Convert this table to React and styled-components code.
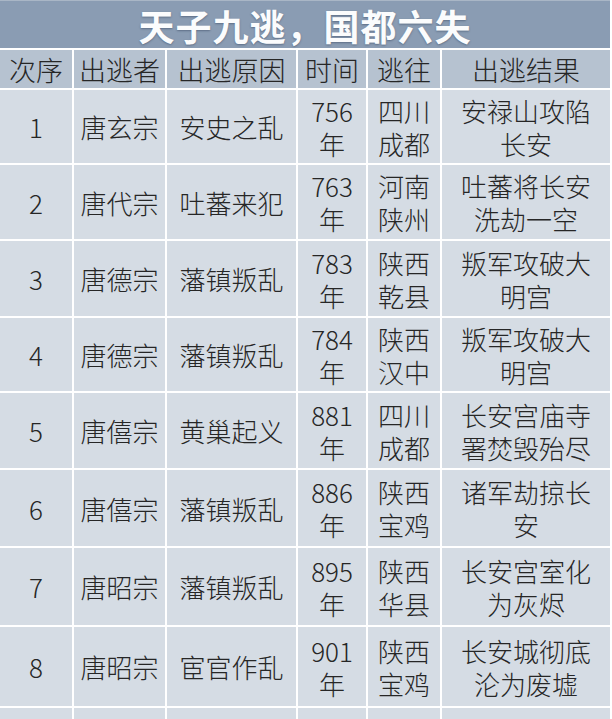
import React from 'react';
import styled, { createGlobalStyle } from 'styled-components';

const Global = createGlobalStyle`
  body {
    margin: 0;
    background: #fff;
    font-family: "Noto Sans CJK SC", "Noto Sans", sans-serif;
  }
`;

const Wrap = styled.div`
  width: 610px;
  display: flex;
  flex-direction: column;
  gap: 2px;
  background: #fff;
`;

const Title = styled.div`
  height: 48px;
  background: #8a9cb3;
  border-top: 1px solid #a9b6c6;
  box-sizing: border-box;
  display: flex;
  align-items: center;
  justify-content: center;
  color: #fbfcfd;
  font-size: 36px;
  font-weight: 700;
  letter-spacing: 1px;
  text-shadow: 0 1px 2px rgba(40, 55, 80, 0.45);
`;

const Grid = styled.div`
  display: grid;
  grid-template-columns: 72px 91px 129px 68px 72px 168px;
  grid-auto-rows: ${(p) => p.rowH}px;
  gap: 2px;
`;

const Cell = styled.div`
  background: ${(p) => (p.head ? '#b6c2d0' : '#d5dce4')};
  display: flex;
  flex-direction: column;
  align-items: center;
  justify-content: center;
  text-align: center;
  color: #262626;
  font-size: ${(p) => (p.head ? 27 : 26)}px;
  font-weight: 300;
  line-height: 33px;
  padding: 0 4px;
  box-sizing: border-box;
`;

const Line = styled.span`
  display: block;
  white-space: nowrap;
`;

const heads = ['次序', '出逃者', '出逃原因', '时间', '逃往', '出逃结果'];

const rows = [
  ['1', '唐玄宗', '安史之乱', ['756', '年'], ['四川', '成都'], ['安禄山攻陷', '长安']],
  ['2', '唐代宗', '吐蕃来犯', ['763', '年'], ['河南', '陕州'], ['吐蕃将长安', '洗劫一空']],
  ['3', '唐德宗', '藩镇叛乱', ['783', '年'], ['陕西', '乾县'], ['叛军攻破大', '明宫']],
  ['4', '唐德宗', '藩镇叛乱', ['784', '年'], ['陕西', '汉中'], ['叛军攻破大', '明宫']],
  ['5', '唐僖宗', '黄巢起义', ['881', '年'], ['四川', '成都'], ['长安宫庙寺', '署焚毁殆尽']],
  ['6', '唐僖宗', '藩镇叛乱', ['886', '年'], ['陕西', '宝鸡'], ['诸军劫掠长', '安']],
  ['7', '唐昭宗', '藩镇叛乱', ['895', '年'], ['陕西', '华县'], ['长安宫室化', '为灰烬']],
  ['8', '唐昭宗', '宦官作乱', ['901', '年'], ['陕西', '宝鸡'], ['长安城彻底', '沦为废墟']],
  ['', '', '', [''], [''], ['']],
];

const heights = [73, 74, 75, 73, 75, 76, 77, 79, 76];

const renderContent = (v) =>
  Array.isArray(v) ? v.map((l, i) => <Line key={i}>{l}</Line>) : <Line>{v}</Line>;

export default function App() {
  return (
    <Wrap>
      <Global />
      <Title>天子九逃，国都六失</Title>
      <Grid rowH={38}>
        {heads.map((h) => (
          <Cell head key={h}>
            {h}
          </Cell>
        ))}
      </Grid>
      {rows.map((r, i) => (
        <Grid rowH={heights[i]} key={i}>
          {r.map((c, j) => (
            <Cell key={j}>{renderContent(c)}</Cell>
          ))}
        </Grid>
      ))}
    </Wrap>
  );
}
